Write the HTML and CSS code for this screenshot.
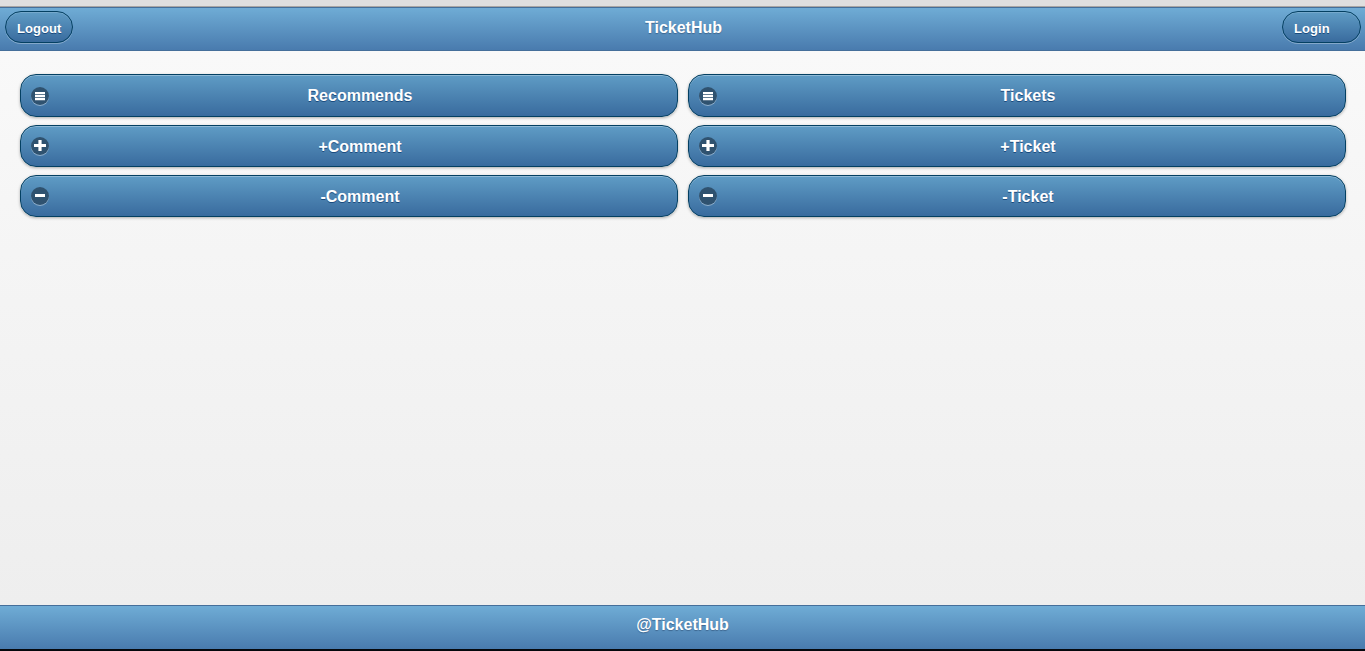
FILE: index.html
```html
<!DOCTYPE html>
<html lang="en">
<head>
<meta charset="utf-8">
<title>TicketHub</title>
<link rel="stylesheet" href="styles.css">
</head>
<body>
<div class="window-edge"></div>
<header class="bar header">
  <a class="btn small">Logout</a>
  <h1 class="title">TicketHub</h1>
  <a class="btn small login">Login</a>
</header>
<main class="content">
  <div class="column">
    <a class="btn wide first"><svg class="icon" viewBox="0 0 18 18"><path d="M4 5h10v2.3H4zM4 8h10v2.3H4zM4 11h10v2.3H4z"/></svg>Recommends</a>
    <a class="btn wide"><svg class="icon" viewBox="0 0 18 18"><path d="M3 7h12v3H3zM7.4 3h3.2v11H7.4z"/></svg>+Comment</a>
    <a class="btn wide"><svg class="icon" viewBox="0 0 18 18"><path d="M4 7h10v3H4z"/></svg>-Comment</a>
  </div>
  <div class="column">
    <a class="btn wide first"><svg class="icon" viewBox="0 0 18 18"><path d="M4 5h10v2.3H4zM4 8h10v2.3H4zM4 11h10v2.3H4z"/></svg>Tickets</a>
    <a class="btn wide"><svg class="icon" viewBox="0 0 18 18"><path d="M3 7h12v3H3zM7.4 3h3.2v11H7.4z"/></svg>+Ticket</a>
    <a class="btn wide"><svg class="icon" viewBox="0 0 18 18"><path d="M4 7h10v3H4z"/></svg>-Ticket</a>
  </div>
</main>
<footer class="bar footer"><h2 class="title">@TicketHub</h2></footer>
</body>
</html>
```
FILE: styles.css
```css
* { box-sizing: border-box; }
body {
  margin: 0;
  height: 651px;
  overflow: hidden;
  display: flex;
  flex-direction: column;
  font-family: "Liberation Sans", Arial, sans-serif;
  font-size: 16px;
  font-weight: bold;
  color: #fff;
  background: #eee;
}
.window-edge {
  height: 7px;
  flex: none;
  background: #dfdfdf;
  border-bottom: 1px solid #a8a6a4;
}
.bar {
  flex: none;
  border: solid #456f9a;
  border-width: 1px 0;
  background: linear-gradient(#6facd5, #497bae);
  text-shadow: 0 1px 1px #3e6790;
}
.header {
  height: 44px;
  display: grid;
  grid-template-columns: 1fr auto 1fr;
  align-items: start;
  padding: 3px 4px 0 5px;
}
.title {
  margin: 0;
  font-size: 16px;
  line-height: 20px;
  text-align: center;
}
.header .title { padding: 7px 0 0 1px; }
.btn {
  border: 1px solid #044062;
  border-radius: 16px;
  background: linear-gradient(#5f9cc5, #396b9e);
  text-shadow: 0 1px 0 #194b7e;
  box-shadow: inset 0 1px 0 rgba(255,255,255,.3), 0 1px 3px rgba(0,0,0,.3);
}
.small {
  justify-self: start;
  width: 68px;
  height: 32px;
  padding-left: 11px;
  font-size: 13px;
  line-height: 33px;
  letter-spacing: .08px;
  box-shadow: inset 0 1px 0 rgba(255,255,255,.15), 0 1px 0 rgba(255,255,255,.3);
}
.login { justify-self: end; width: 79px; }
.content {
  flex: 1;
  display: grid;
  grid-template-columns: 1fr 1fr;
  gap: 10px;
  padding: 23px 19px 0 20px;
  background: linear-gradient(#f9f9f9, #eee);
}
.column {
  display: flex;
  flex-direction: column;
  gap: 8px;
}
.wide {
  height: 42px;
  display: grid;
  grid-template-columns: 18px 1fr;
  column-gap: 2px;
  padding: 0 8px 0 10px;
  line-height: 41px;
  text-align: center;
}
.first { height: 43px; }
.icon {
  width: 18px;
  height: 18px;
  margin-top: 11px;
  border-radius: 9px;
  background: #2f526f;
  box-shadow: 0 1px 0 rgba(255,255,255,.4);
  fill: #fff;
}
.first .icon { margin-top: 12px; }
.footer {
  height: 46px;
  padding-top: 9px;
  border-bottom: 2px solid #05080d;
}
```
